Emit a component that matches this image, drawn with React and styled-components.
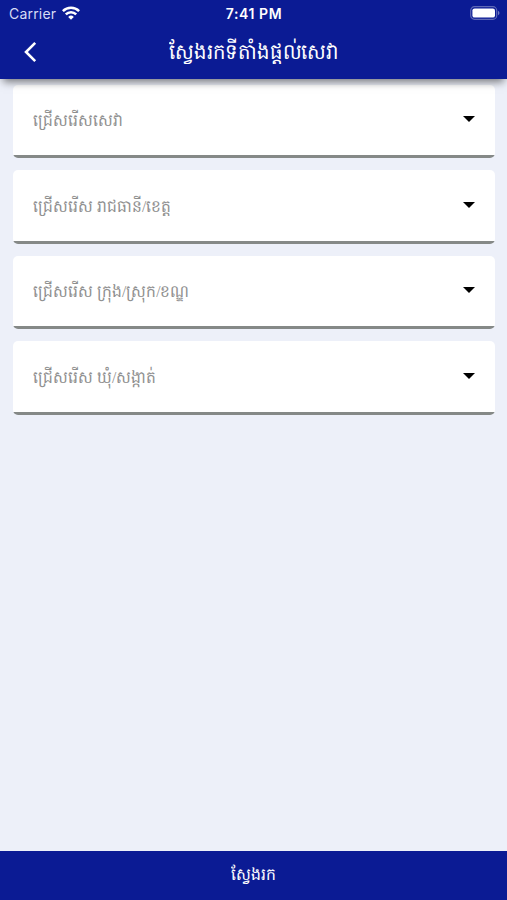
import React from "react";
import styled, { createGlobalStyle } from "styled-components";

const Global = createGlobalStyle`
  * { box-sizing: border-box; }
  body { margin: 0; background: #edf0f9; }
`;

const Screen = styled.div`
  height: 900px;
  display: flex;
  flex-direction: column;
  background: #edf0f9;
  font-family: Inter, "Noto Sans", sans-serif;
  overflow: hidden;
`;

const Header = styled.header`
  position: relative;
  z-index: 1;
  flex: none;
  height: 79px;
  background: #0b1b94;
  color: #fff;
  box-shadow: 0 6px 8px -3px rgba(0, 0, 0, 0.5);
`;

const StatusBar = styled.div`
  display: grid;
  grid-template-columns: 1fr auto 1fr;
  align-items: center;
  height: 27px;
  padding: 0 7px 0 9px;
`;

const Carrier = styled.div`
  display: flex;
  align-items: center;
  gap: 6px;
  font-size: 14px;
  letter-spacing: 0.2px;
  color: #d7dcf5;

  svg {
    margin-top: -2px;
  }
`;

const Clock = styled.div`
  margin-left: -1px;
  font-size: 14px;
  font-weight: 600;
  letter-spacing: 0.6px;
`;

const BatteryIcon = styled.svg`
  justify-self: end;
  margin-top: -1px;
`;

const NavBar = styled.div`
  display: grid;
  grid-template-columns: 60px 1fr 60px;
  height: 48px;
`;

const BackButton = styled.button`
  display: flex;
  align-items: center;
  justify-content: center;
  padding: 2px 0 0;
  border: 0;
  background: none;
  color: inherit;
`;

const Title = styled.h1`
  margin: 0;
  text-align: center;
  font-size: 19.9px;
  line-height: 48px;
  font-weight: 400;
  transform: scale(0.987, 1.08);
`;

const Form = styled.main`
  flex: 1;
  display: flex;
  flex-direction: column;
  gap: 12px;
  padding: 5.5px 12px 0 13px;
`;

const Select = styled.button`
  display: flex;
  align-items: center;
  justify-content: space-between;
  flex: none;
  height: 73.6px;
  padding: 0 20px 4px;
  border: 0;
  border-radius: 5px;
  background: linear-gradient(to top, #858987 2.6px, #fff 2.6px);
  color: #8f8f8f;
  font-family: "Liberation Serif", serif;
  font-size: 15.5px;
  text-align: left;
`;

const Placeholder = styled.span`
  padding-top: 5px;
  transform: scaleY(1.1);
`;

const SubmitButton = styled.button`
  flex: none;
  height: 49px;
  padding: 1px 0 0;
  border: 0;
  background: #0b1b94;
  color: #fff;
  font-family: inherit;
  font-size: 15.6px;
`;

const SubmitLabel = styled.span`
  display: inline-block;
  transform: scaleY(1.08);
`;

const fields = [
  "ជ្រើសរើសសេវា",
  "ជ្រើសរើស រាជធានី/ខេត្ត",
  "ជ្រើសរើស ក្រុង/ស្រុក/ខណ្ឌ",
  "ជ្រើសរើស ឃុំ/សង្កាត់",
];

export default function App() {
  return (
    <Screen>
      <Global />
      <Header>
        <StatusBar>
          <Carrier>
            Carrier
            <svg width="18" height="14" viewBox="0 0 18 14" fill="none" stroke="#fff" strokeWidth="2.5">
              <path d="M0.9 5.2a11.4 11.4 0 0 1 16.2 0" />
              <path d="M3.8 8.4a7.3 7.3 0 0 1 10.4 0" />
              <path d="M9 13.8l-2.8-2.9a4 4 0 0 1 5.6 0z" fill="#fff" stroke="none" />
            </svg>
          </Carrier>
          <Clock>7:41 PM</Clock>
          <BatteryIcon width="30" height="14" viewBox="0 0 30 14">
            <rect x="0.7" y="0.7" width="26" height="12.6" rx="3.8" fill="none" stroke="#5f69b6" strokeWidth="1.2" />
            <rect x="2.4" y="2.4" width="22.6" height="9.2" rx="2.2" fill="#fff" />
            <path d="M28 4.8c2 .9 2 3.5 0 4.4z" fill="#737cc0" />
          </BatteryIcon>
        </StatusBar>
        <NavBar>
          <BackButton aria-label="Back">
            <svg width="14" height="22" viewBox="0 0 14 22" fill="none" stroke="#fff" strokeWidth="2.6">
              <path d="M12.2 1.8L3 11l9.2 9.2" />
            </svg>
          </BackButton>
          <Title>ស្វែងរកទីតាំងផ្តល់សេវា</Title>
        </NavBar>
      </Header>
      <Form>
        {fields.map((label) => (
          <Select key={label}>
            <Placeholder>{label}</Placeholder>
            <svg width="12" height="6" viewBox="0 0 12 6">
              <path d="M0 0h12L6 6z" fill="#000" />
            </svg>
          </Select>
        ))}
      </Form>
      <SubmitButton>
        <SubmitLabel>ស្វែងរក</SubmitLabel>
      </SubmitButton>
    </Screen>
  );
}
